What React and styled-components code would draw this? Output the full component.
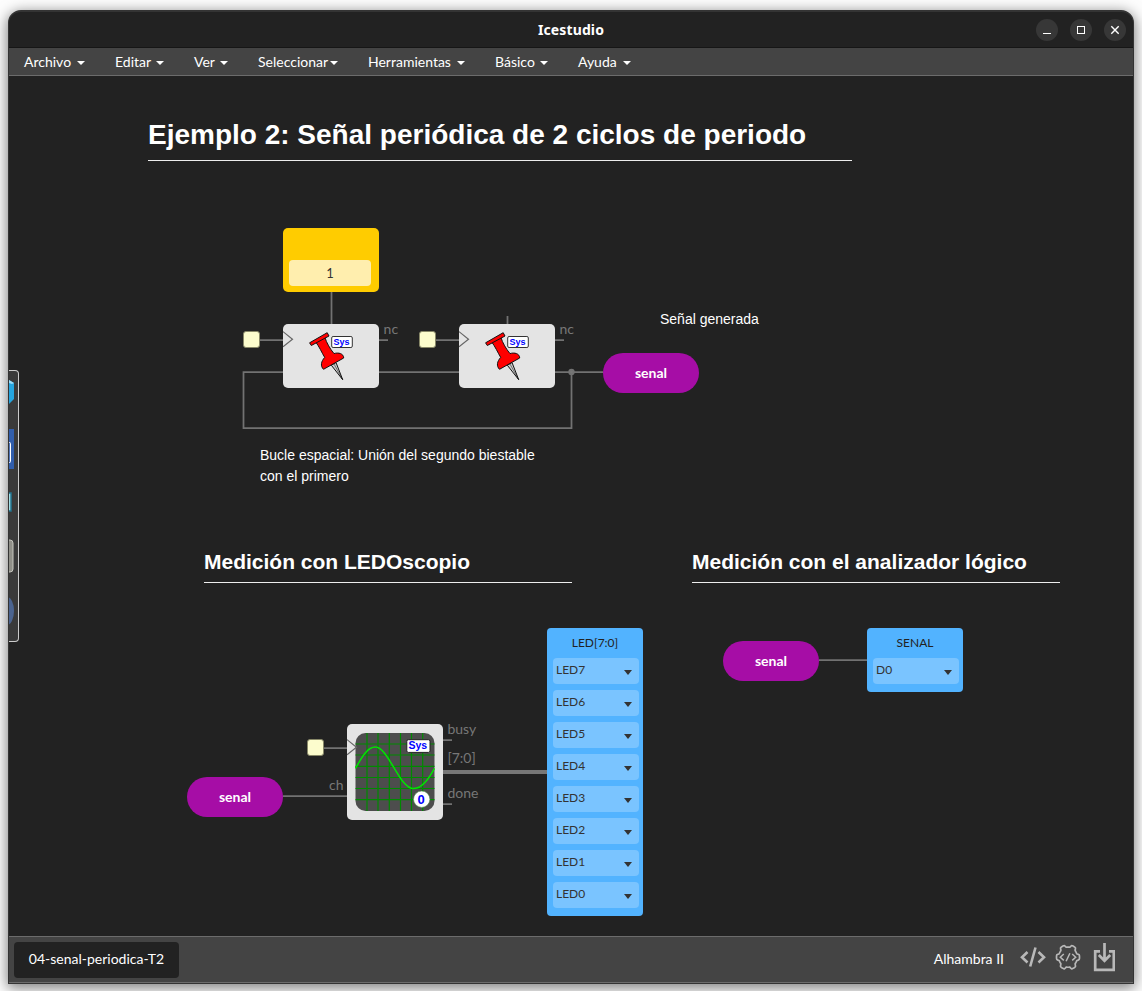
import React from 'react';
import styled, { createGlobalStyle } from 'styled-components';

const GlobalStyle = createGlobalStyle`
  * { box-sizing: border-box; }
  html, body { margin: 0; padding: 0; }
  body {
    background: #fdfdfd;
    font-family: Lato, sans-serif;
    overflow: hidden;
  }
`;

const Desktop = styled.div`
  width: 1142px;
  height: 991px;
  padding: 10px 8px 7px;
  overflow: hidden;
`;

const Window = styled.div`
  display: flex;
  flex-direction: column;
  width: 1126px;
  height: 974px;
  border: 1px solid #343434;
  border-top-width: 2px;
  border-radius: 13px 13px 0 0;
  background: #222;
  overflow: hidden;
  box-shadow: 0 3px 14px 1px rgba(0, 0, 0, 0.5);
`;

const TitleBar = styled.header`
  display: grid;
  grid-template-columns: 1fr auto 1fr;
  align-items: center;
  height: 36px;
  flex: none;
  border-bottom: 1px solid #161616;
  color: #fff;
`;

const Title = styled.h1`
  grid-column: 2;
  margin: 0;
  font: bold 14px/20px 'Noto Sans', sans-serif;
  letter-spacing: 0.12px;
`;

const WindowButtons = styled.div`
  display: flex;
  justify-content: flex-end;
  gap: 12px;
  padding-right: 7px;
`;

const WindowButton = styled.button`
  width: 22px;
  height: 22px;
  padding: 0;
  border: 0;
  border-radius: 50%;
  background: #373737;
  svg { display: block; }
`;

const MenuBar = styled.nav`
  display: flex;
  flex: none;
  gap: 30px;
  height: 28px;
  padding-left: 15px;
  background: #444;
  border-bottom: 1px solid #6c6c6c;
`;

const MenuItem = styled.div`
  display: flex;
  justify-content: space-between;
  width: ${(p) => p.$w}px;
  color: #fff;
  font-size: 14px;
  line-height: 28px;
  white-space: nowrap;
`;

const Caret = styled.span`
  width: 8px;
  height: 4px;
  margin-top: 13px;
  background: #fff;
  clip-path: polygon(0 0, 100% 0, 50% 100%);
`;

const Canvas = styled.main`
  position: relative;
  height: 860px;
  flex: none;
  background: #222;
  overflow: hidden;
`;

const Wires = styled.svg`
  position: absolute;
  inset: 0;
  fill: none;
  stroke: #727272;
  stroke-width: 1.75;
`;

const Node = styled.div`
  position: absolute;
  left: ${(p) => p.$x}px;
  top: ${(p) => p.$y}px;
`;

const Heading = styled(Node).attrs({ as: 'h2' })`
  margin: 0;
  width: ${(p) => p.$w}px;
  height: ${(p) => p.$h}px;
  border-bottom: 1px solid #eee;
  color: #fff;
  font: bold ${(p) => p.$size}px/1.1 'Liberation Sans', sans-serif;
  white-space: nowrap;
`;

const Note = styled(Node)`
  color: #fff;
  font: 14px/21px 'Liberation Sans', sans-serif;
  white-space: nowrap;
`;

const PortLabel = styled(Node)`
  color: #777;
  font-size: 14px;
  line-height: 18px;
`;

const Clock = styled(Node)`
  width: 17px;
  height: 17px;
  border: 1px solid #888868;
  border-radius: 3px;
  background: #fcfccd;
`;

const Constant = styled(Node)`
  display: flex;
  flex-direction: column;
  justify-content: flex-end;
  width: 96px;
  height: 64px;
  padding: 6px 8px 6px 6px;
  border-radius: 5px;
  background: #ffcc00;
`;

const ConstantValue = styled.div`
  height: 26px;
  border-radius: 4px;
  background: #ffeeae;
  color: #333;
  font-size: 13px;
  line-height: 27px;
  text-align: center;
`;

const Block = styled(Node)`
  width: 96px;
  height: ${(p) => p.$h}px;
  border-radius: 5px;
  background: #e4e4e4;
  svg { display: block; }
`;

const Label = styled(Node)`
  width: 96px;
  height: 40px;
  border-radius: 20px;
  background: #a60da6;
  color: #fff;
  font-weight: bold;
  font-size: 14px;
  line-height: 40px;
  text-align: center;
`;

const Output = styled(Node)`
  display: flex;
  flex-direction: column;
  gap: 6px;
  width: 96px;
  padding: 0 4px 8px 6px;
  border-radius: 4px;
  background: #52b3ff;
`;

const OutputName = styled.div`
  height: 24px;
  padding-right: 2px;
  color: #222;
  font-size: 12px;
  line-height: 30px;
  text-align: center;
`;

const Pin = styled.div`
  display: flex;
  justify-content: space-between;
  height: 26px;
  padding: 0 7px 0 3px;
  border-radius: 4px;
  background: #7ac4ff;
  color: #333;
  font-size: 12px;
  line-height: 24px;
`;

const PinArrow = styled.span`
  width: 8px;
  height: 5px;
  margin-top: 12px;
  background: #333;
  clip-path: polygon(0 0, 100% 0, 50% 100%);
`;

const Dock = styled.aside`
  position: absolute;
  left: 0;
  top: 294px;
  width: 10px;
  height: 272px;
  border: 1px solid #ccc;
  border-left: 0;
  border-radius: 0 4px 4px 0;
  background: #3a3a3a;
  svg { display: block; }
`;

const Footer = styled.footer`
  display: flex;
  align-items: center;
  flex: none;
  height: 47px;
  padding: 0 18px 0 5px;
  border-top: 1px solid #6c6c6c;
  border-bottom: 1px solid #6c6c6c;
  background: #444;
  color: #fff;
  font-size: 14px;
`;

const Tab = styled.div`
  width: 165px;
  height: 36px;
  margin-right: auto;
  border-radius: 4px;
  background: #222;
  line-height: 34px;
  text-align: center;
`;

const Board = styled.span`
  margin-right: 16px;
  padding-bottom: 2px;
  line-height: 20px;
`;

const FooterIcons = styled.div`
  display: flex;
  padding-bottom: 6px;
  svg { display: block; }
`;

const ClockInput = ({ y }) => (
  <path d={`M0 ${y - 7.6}L9.5 ${y}L0 ${y + 7.6}`} fill="none" stroke="#666" strokeWidth="1.2" />
);

function SystemBlock({ x, y }) {
  return (
    <Block $x={x} $y={y} $h={64}>
      <svg width="96" height="64">
        <ClockInput y={15.2} />
        <g stroke="#111" strokeWidth="1" strokeLinejoin="round">
          <path d="M48.3 41.2L53 38.5L59.7 55.7Z" fill="#ccc" />
          <path d="M51 40L59.7 55.7" strokeWidth=".5" />
          <path d="M32.3 17.5C36 22 39 29 41.7 33.4C38 37.5 37.2 42 40.5 45.3L60.7 34C60.6 29.5 55.5 28.2 51 29.6C47.2 25 43.5 19 41.8 13Z" fill="#f00" />
          <path d="M26.6 18.8L44.2 8.7L46 12L28.3 21.5Z" fill="#f00" />
        </g>
        <rect x="48.7" y="12.5" width="20.6" height="11" rx="1.4" fill="#fff" stroke="#333" />
        <text x="50.6" y="21" fill="#00f" fontFamily="Liberation Sans, sans-serif" fontWeight="bold" fontSize="9">Sys</text>
      </svg>
    </Block>
  );
}

function ScopeBlock({ x, y }) {
  const lines = [20, 31, 42.3, 53.5, 64.5, 75.7];
  return (
    <Block $x={x} $y={y} $h={96}>
      <svg width="96" height="96">
        <rect x="8.5" y="9" width="79" height="78" rx="10" fill="#4d4d4d" />
        <g stroke="#008a00" strokeWidth="1.2">
          {lines.map((v) => <path key={v} d={`M${v} 9V87M8.5 ${v}H87.5`} />)}
        </g>
        <path d="M8.5 44.3C15 33 20.5 23 28.3 23C41.5 23 52 64.6 66.7 64.6C75.5 64.6 82 54 87.5 44.3" fill="none" stroke="#00e500" strokeWidth="1.5" />
        <rect x="59.8" y="15.7" width="23.2" height="12.7" rx="1.5" fill="#fff" stroke="#222" />
        <text x="61.5" y="25.3" fill="#00f" fontFamily="Liberation Sans, sans-serif" fontWeight="bold" fontSize="10.5">Sys</text>
        <circle cx="74.7" cy="75.2" r="8.2" fill="#fff" stroke="#4a8a4a" strokeWidth=".6" />
        <text x="74" y="80" textAnchor="middle" fill="#00f" fontFamily="Liberation Sans, sans-serif" fontWeight="bold" fontSize="13">0</text>
        <ClockInput y={23.2} />
      </svg>
    </Block>
  );
}

function OutputBlock({ x, y, name, pins }) {
  return (
    <Output $x={x} $y={y}>
      <OutputName>{name}</OutputName>
      {pins.map((pin) => (
        <Pin key={pin}>{pin}<PinArrow /></Pin>
      ))}
    </Output>
  );
}

const MENU = [
  ['Archivo', 61], ['Editar', 49], ['Ver', 34], ['Seleccionar', 80],
  ['Herramientas', 97], ['Básico', 53], ['Ayuda', 53],
];

const LEDS = ['LED7', 'LED6', 'LED5', 'LED4', 'LED3', 'LED2', 'LED1', 'LED0'];

const gearPath = (() => {
  const points = [];
  for (let i = 0; i <= 96; i += 1) {
    const a = (i / 96) * Math.PI * 2;
    const r = 10.4 + 1.1 * Math.tanh(3.5 * Math.cos(6 * a));
    points.push(`${(13 + r * Math.cos(a)).toFixed(2)} ${(13 + 1.08 * r * Math.sin(a)).toFixed(2)}`);
  }
  return `M${points.join('L')}Z`;
})();

export default function App() {
  return (
    <>
      <GlobalStyle />
      <Desktop>
        <Window>
          <TitleBar>
            <Title>Icestudio</Title>
            <WindowButtons>
              <WindowButton>
                <svg width="22" height="22"><path d="M7 14.5H15" stroke="#fff" /></svg>
              </WindowButton>
              <WindowButton>
                <svg width="22" height="22"><rect x="7.5" y="7.5" width="7" height="7" fill="none" stroke="#fff" /></svg>
              </WindowButton>
              <WindowButton>
                <svg width="22" height="22"><path d="M7.3 7.3L14.7 14.7M14.7 7.3L7.3 14.7" stroke="#fff" strokeWidth="1.4" /></svg>
              </WindowButton>
            </WindowButtons>
          </TitleBar>
          <MenuBar>
            {MENU.map(([name, width]) => (
              <MenuItem key={name} $w={width}>{name}<Caret /></MenuItem>
            ))}
          </MenuBar>
          <Canvas>
            <Wires width="1124" height="860">
              <path d="M322.5 216V248M498.5 240V248M250 264H274M426 264H450M370 264H379M546 264H555" />
              <path d="M274 296H234.5V352H562.5V296M370 296H450M546 296H594" />
              <circle cx="562.5" cy="296" r="2.3" fill="#777" />
              <path d="M314 672H338M274 720.2H338M434 664H443M434 728H443M810 584H858" />
              <path d="M434 696H538" strokeWidth="4" stroke="#777" />
            </Wires>

            <Heading $x={139} $y={44} $w={704} $h={41} $size={28}>Ejemplo 2: Señal periódica de 2 ciclos de periodo</Heading>
            <Heading $x={195} $y={474} $w={368} $h={33} $size={21}>Medición con LEDOscopio</Heading>
            <Heading $x={683} $y={474} $w={368} $h={33} $size={21}>Medición con el analizador lógico</Heading>

            <Constant $x={274} $y={152}><ConstantValue>1</ConstantValue></Constant>
            <Clock $x={234} $y={255.4} />
            <SystemBlock x={274} y={248} />
            <PortLabel $x={374.6} $y={244}>nc</PortLabel>
            <Clock $x={410} $y={255.4} />
            <SystemBlock x={450} y={248} />
            <PortLabel $x={550.4} $y={244}>nc</PortLabel>
            <Label $x={594} $y={277}>senal</Label>
            <Note $x={651} $y={233}>Señal generada</Note>
            <Note $x={251} $y={369}>Bucle espacial: Unión del segundo biestable<br />con el primero</Note>

            <Label $x={178} $y={701}>senal</Label>
            <Clock $x={298} $y={663.4} />
            <PortLabel $x={320} $y={700}>ch</PortLabel>
            <ScopeBlock x={338} y={648} />
            <PortLabel $x={438.4} $y={644}>busy</PortLabel>
            <PortLabel $x={438.4} $y={673}>[7:0]</PortLabel>
            <PortLabel $x={438.4} $y={708}>done</PortLabel>
            <OutputBlock x={538} y={552} name="LED[7:0]" pins={LEDS} />

            <Label $x={714} $y={565}>senal</Label>
            <OutputBlock x={858} y={552} name="SENAL" pins={['D0']} />

            <Dock>
              <svg width="9" height="270">
                <path d="M0 9L5 12V28L0 33Z" fill="#25a5df" />
                <path d="M0 9L5 12L3 13L0 12Z" fill="#9bdcf8" />
                <rect y="58" width="5" height="40" fill="#315eac" />
                <rect x="-3" y="71.5" width="4.5" height="20" rx="1" fill="#5075b8" stroke="#fff" />
                <rect x="-3" y="122" width="5" height="18" fill="#a4e1e8" stroke="#237590" strokeWidth="1.5" />
                <rect x="-5" y="169" width="9" height="32" rx="3" fill="#8f8f88" stroke="#c4c4bd" />
                <ellipse cx="-2" cy="240" rx="7" ry="14" fill="#4b6490" />
              </svg>
            </Dock>
          </Canvas>
          <Footer>
            <Tab>04-senal-periodica-T2</Tab>
            <Board>Alhambra II</Board>
            <FooterIcons>
              <svg width="95" height="32" viewBox="1020 941 95 32" fill="none" stroke="#b8b8b8">
                <path d="M1027.5 952L1022 957.3L1027.5 962.5M1038.5 952L1044 957.3L1038.5 962.5M1035.5 947.5L1030.2 966.5" strokeWidth="2.6" />
                <g transform="translate(1055 944.2)">
                  <path d={gearPath} strokeWidth="1.7" strokeLinejoin="round" />
                  <path d="M8.8 9.8L5.3 13L8.8 16.2M17.2 9.8L20.7 13L17.2 16.2M14.9 9L11.1 17" strokeWidth="1.5" />
                </g>
                <path d="M1100 951.3H1095.2V969.8H1113.8V951.3H1109M1104.5 943V960.5M1098.8 955L1104.5 960.8L1110.2 955" strokeWidth="2.7" />
              </svg>
            </FooterIcons>
          </Footer>
        </Window>
      </Desktop>
    </>
  );
}
